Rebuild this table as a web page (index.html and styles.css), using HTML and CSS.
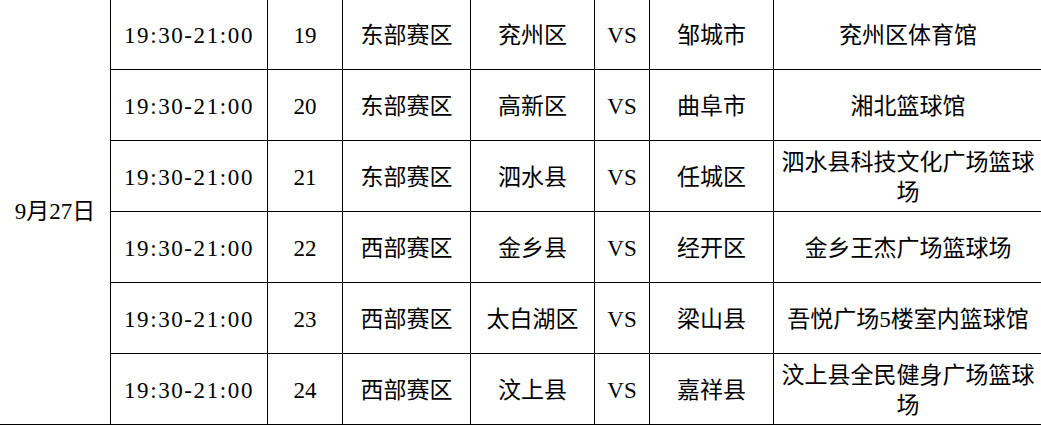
FILE: index.html
```html
<!DOCTYPE html>
<html lang="zh-CN">
<head>
<meta charset="utf-8">
<title>赛程表</title>
<link rel="stylesheet" href="styles.css">
</head>
<body>
<table class="schedule">
  <colgroup>
    <col class="c-date">
    <col class="c-time">
    <col class="c-no">
    <col class="c-zone">
    <col class="c-team">
    <col class="c-vs">
    <col class="c-team2">
    <col class="c-venue">
  </colgroup>
  <tbody>
    <tr>
      <td class="date" rowspan="6">9月27日</td>
      <td class="time">19:30-21:00</td><td>19</td><td>东部赛区</td><td>兖州区</td><td>VS</td><td>邹城市</td><td>兖州区体育馆</td>
    </tr>
    <tr>
      <td class="time">19:30-21:00</td><td>20</td><td>东部赛区</td><td>高新区</td><td>VS</td><td>曲阜市</td><td>湘北篮球馆</td>
    </tr>
    <tr>
      <td class="time">19:30-21:00</td><td>21</td><td>东部赛区</td><td>泗水县</td><td>VS</td><td>任城区</td><td>泗水县科技文化广场篮球场</td>
    </tr>
    <tr>
      <td class="time">19:30-21:00</td><td>22</td><td>西部赛区</td><td>金乡县</td><td>VS</td><td>经开区</td><td>金乡王杰广场篮球场</td>
    </tr>
    <tr>
      <td class="time">19:30-21:00</td><td>23</td><td>西部赛区</td><td>太白湖区</td><td>VS</td><td>梁山县</td><td>吾悦广场5楼室内篮球馆</td>
    </tr>
    <tr>
      <td class="time">19:30-21:00</td><td>24</td><td>西部赛区</td><td>汶上县</td><td>VS</td><td>嘉祥县</td><td>汶上县全民健身广场篮球场</td>
    </tr>
  </tbody>
</table>
</body>
</html>
```
FILE: styles.css
```css
html, body {
  margin: 0;
  padding: 0;
  background: #fff;
  overflow: hidden;
}

.schedule {
  border-collapse: collapse;
  table-layout: fixed;
  width: 1043px;
  margin: -2px 0 0 -1px;
  font-family: "Liberation Serif", "Noto Sans CJK SC", serif;
  font-size: 23px;
  line-height: 1.3;
  color: #000;
}

.c-date { width: 111px; }
.c-time { width: 157px; }
.c-no { width: 75px; }
.c-zone { width: 128px; }
.c-team { width: 124px; }
.c-vs { width: 55px; }
.c-team2 { width: 124px; }
.c-venue { width: 269px; }

.schedule td {
  border: 1px solid #000;
  height: 71px;
  padding: 4px 5px 0;
  text-align: center;
  vertical-align: middle;
  box-sizing: border-box;
}

.schedule td.time {
  letter-spacing: 1.6px;
  padding-top: 3px;
}

.schedule td.date {
  padding: 1px 0 0;
}
```
